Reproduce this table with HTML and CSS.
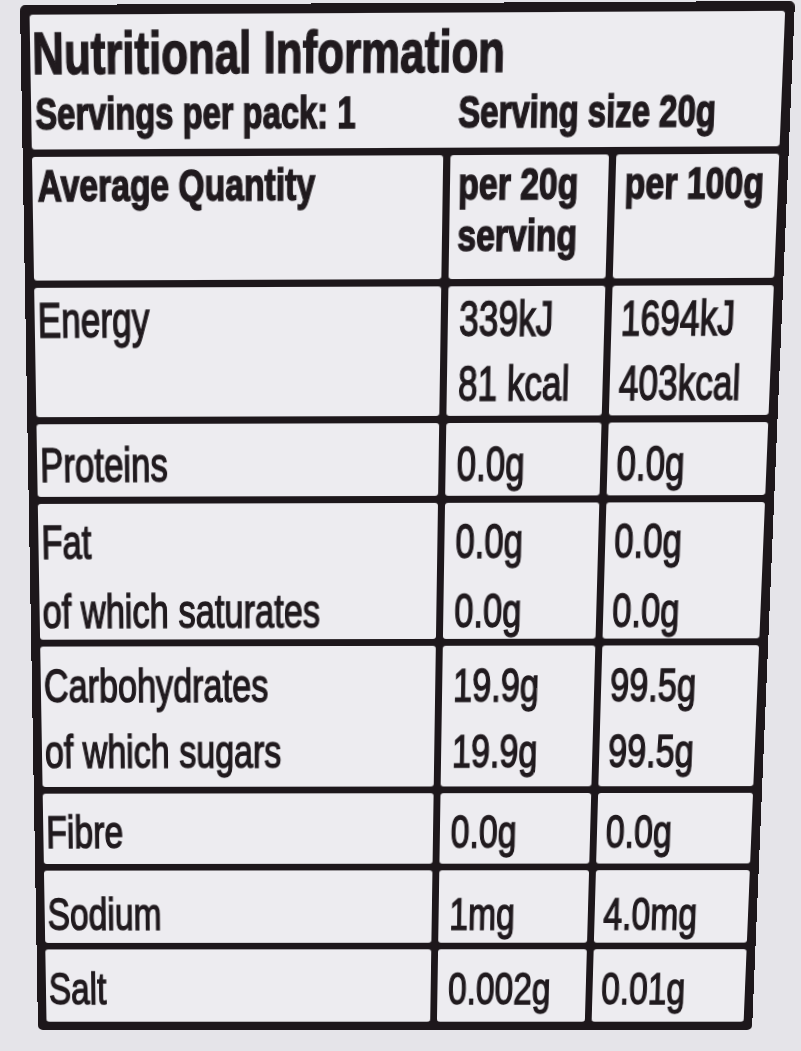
FILE: index.html
```html
<!DOCTYPE html>
<html lang="en">
<head>
<meta charset="utf-8">
<title>Nutritional Information</title>
<link rel="stylesheet" href="styles.css">
</head>
<body>
<section class="label">
  <header class="head">
    <h1 class="title"><span class="t">Nutritional Information</span></h1>
    <div class="servings"><span class="t">Servings per pack: 1</span><span class="t">Serving size 20g</span></div>
  </header>
  <div class="facts">
    <div class="row row-head">
      <div class="cell name"><span class="t">Average Quantity</span></div>
      <div class="cell v1"><span class="t">per 20g<br>serving</span></div>
      <div class="cell v2"><span class="t">per 100g</span></div>
    </div>
    <div class="row row-energy">
      <div class="cell name"><span class="t">Energy</span></div>
      <div class="cell v1"><span class="t">339kJ<br>81 kcal</span></div>
      <div class="cell v2"><span class="t">1694kJ<br>403kcal</span></div>
    </div>
    <div class="row row-protein">
      <div class="cell name"><span class="t">Proteins</span></div>
      <div class="cell v1"><span class="t">0.0g</span></div>
      <div class="cell v2"><span class="t">0.0g</span></div>
    </div>
    <div class="row row-fat">
      <div class="cell name"><span class="t">Fat<br>of which saturates</span></div>
      <div class="cell v1"><span class="t">0.0g<br>0.0g</span></div>
      <div class="cell v2"><span class="t">0.0g<br>0.0g</span></div>
    </div>
    <div class="row row-carb">
      <div class="cell name"><span class="t">Carbohydrates<br>of which sugars</span></div>
      <div class="cell v1"><span class="t">19.9g<br>19.9g</span></div>
      <div class="cell v2"><span class="t">99.5g<br>99.5g</span></div>
    </div>
    <div class="row row-fibre">
      <div class="cell name"><span class="t">Fibre</span></div>
      <div class="cell v1"><span class="t">0.0g</span></div>
      <div class="cell v2"><span class="t">0.0g</span></div>
    </div>
    <div class="row row-sodium">
      <div class="cell name"><span class="t">Sodium</span></div>
      <div class="cell v1"><span class="t">1mg</span></div>
      <div class="cell v2"><span class="t">4.0mg</span></div>
    </div>
    <div class="row row-salt">
      <div class="cell name"><span class="t">Salt</span></div>
      <div class="cell v1"><span class="t">0.002g</span></div>
      <div class="cell v2"><span class="t">0.01g</span></div>
    </div>
  </div>
</section>
</body>
</html>
```

FILE: styles.css
```css
html, body {
  margin: 0;
  padding: 0;
  overflow: hidden;
  background: #e5e4e9;
}

body {
  width: 801px;
  height: 1051px;
  font-family: "Liberation Sans", Arial, sans-serif;
  color: #201a1e;
}

/* The label is laid out flat, then projected to match the photo's perspective */
.label {
  box-sizing: border-box;
  width: 740px;
  height: 1027px;
  border: 9px solid #1d171b;
  border-radius: 5px;
  background: #1d171b;
  display: flex;
  flex-direction: column;
  row-gap: 7px;
  transform-origin: 0 0;
  transform: matrix3d(1.043121, -0.00541066, 0, -0.00000525307,
                      0.0206792, 1.0835015, 0, 0.0000829601,
                      0, 0, 1, 0,
                      20, 5, 0, 1);
}

/* condensed lettering */
.t {
  display: inline-block;
  transform: scaleX(0.752);
  transform-origin: 0 0;
  white-space: nowrap;
  -webkit-text-stroke: 1.5px #201a1e;
}

.head {
  flex: none;
  box-sizing: border-box;
  height: 126.4px;
  padding-top: 8px;
  background: #edecf0;
  border-radius: 3px;
  font-weight: 700;
}

.title {
  margin: 0;
  padding-left: 2.3px;
  font-size: 56px;
  line-height: 55px;
  font-weight: 700;
}

.servings {
  display: grid;
  grid-template-columns: 412px auto;
  margin-top: 9px;
  font-size: 42px;
  line-height: 42px;
}

.servings .t:first-child {
  margin-left: 4.1px;
}

.facts {
  flex: 1;
  display: grid;
  grid-template-columns: 397.5px 153.5px 157px;
  grid-template-rows: 117.7px 126.3px 72.1px 137px 144.6px 73.8px 77.1px 78px;
  column-gap: 7px;
  row-gap: 7px;
}

.row {
  display: contents;
  --pt: 9px;
  --lh: 64px;
}

.cell {
  box-sizing: border-box;
  background: #edecf0;
  border-radius: 3px;
  font-size: 48px;
  line-height: var(--lh);
  padding-top: var(--pt);
  white-space: nowrap;
  overflow: hidden;
}

.cell .t {
  transform: scaleX(0.72);
}

.name { padding-left: 3.4px; }
.v1 { padding-left: 11.3px; }
.v2 { padding-left: 9.4px; }

.row-head .cell {
  font-weight: 700;
  font-size: 43px;
}
.row-head .cell .t {
  transform: scaleX(0.76);
}
.row-head .name { padding-left: 5.3px; }
.row-head .v1 { padding-left: 8.6px; }
.row-head .v2 { padding-left: 9px; }

.row-head { --pt: 2.7px; --lh: 48.6px; }
.row-energy { --pt: 0px; --lh: 63px; }
.row-protein { --pt: 8.5px; --lh: 64px; }
.row-fat { --pt: 3.2px; --lh: 70px; }
.row-carb { --pt: 7px; --lh: 67.2px; }
.row-fibre { --pt: 9px; --lh: 64px; }
.row-sodium { --pt: 15px; --lh: 64px; }
.row-salt { --pt: 11.5px; --lh: 64px; }
```
